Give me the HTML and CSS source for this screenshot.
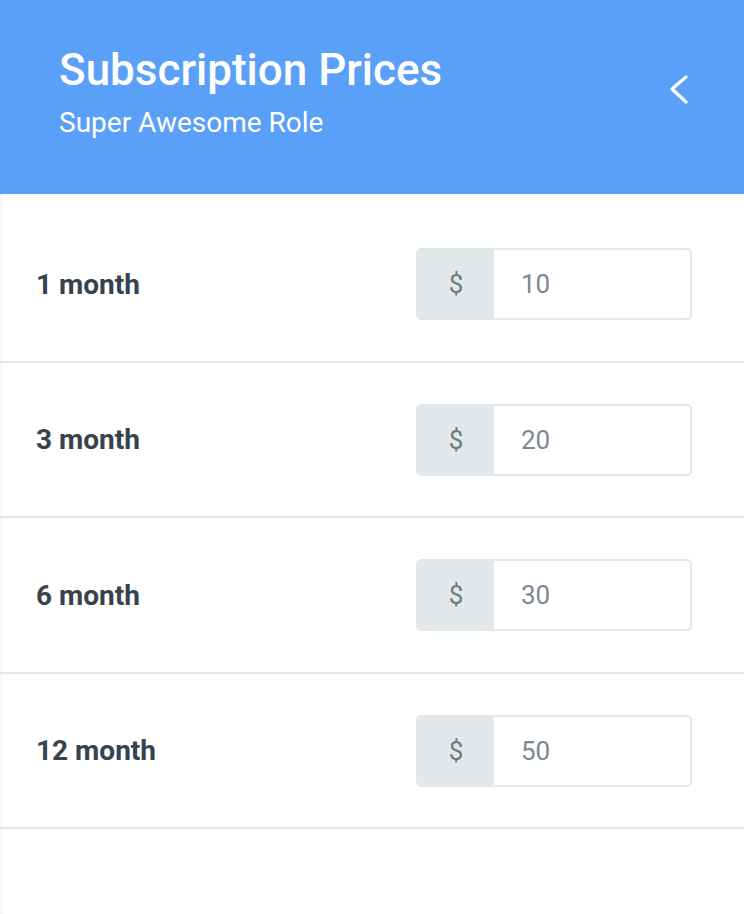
FILE: index.html
```html
<!DOCTYPE html>
<html>
<head>
<meta charset="utf-8">
<link rel="stylesheet" href="styles.css">
</head>
<body>
<div class="panel">
  <header class="header">
    <div class="titles">
      <h1 class="title">Subscription Prices</h1>
      <div class="subtitle">Super Awesome Role</div>
    </div>
    <button class="back" aria-label="Back">
      <svg width="20" height="30" viewBox="0 0 20 30"><path d="M18 3 L4 15 L18 28" fill="none" stroke="#fff" stroke-width="3.2" stroke-linecap="round" stroke-linejoin="round"/></svg>
    </button>
  </header>
  <div class="list">
    <div class="row">
      <span class="label">1 month</span>
      <div class="input-group"><span class="addon">$</span><span class="value">10</span></div>
    </div>
    <div class="row">
      <span class="label">3 month</span>
      <div class="input-group"><span class="addon">$</span><span class="value">20</span></div>
    </div>
    <div class="row">
      <span class="label">6 month</span>
      <div class="input-group"><span class="addon">$</span><span class="value">30</span></div>
    </div>
    <div class="row">
      <span class="label">12 month</span>
      <div class="input-group"><span class="addon">$</span><span class="value">50</span></div>
    </div>
  </div>
</div>
</body>
</html>
```
FILE: styles.css
```css
* { box-sizing: border-box; }
html, body { margin: 0; padding: 0; background: #fff; }
body { font-family: Roboto, "Liberation Sans", sans-serif; }
.panel { width: 744px; min-height: 914px; background: #fff; box-shadow: inset 4px 0 4px -3px rgba(0,0,0,0.06); }
.header {
  height: 194px;
  background: #5ba0f8;
  display: flex;
  align-items: flex-start;
  justify-content: space-between;
  padding: 44px 56px 0 59px;
}
.title { margin: 0; color: #fff; font-size: 44px; font-weight: 500; line-height: 52px; }
.subtitle { color: #fff; font-size: 28px; font-weight: 400; line-height: 32px; margin-top: 11px; }
.back { background: none; border: 0; padding: 0; display: flex; margin-top: 30px; }
.list { padding-top: 13px; }
.row {
  display: flex;
  align-items: center;
  justify-content: space-between;
  padding: 41px 52px 40.5px 36px;
  border-bottom: 2px solid #e3e7ea;
}
.label { font-size: 28px; font-weight: 700; color: #36434d; }
.input-group {
  width: 276px;
  height: 72px;
  display: flex;
  border: 2px solid #e3e8eb;
  border-radius: 5px;
  overflow: hidden;
}
.addon {
  width: 76px;
  background: #e3e8eb;
  display: flex;
  align-items: center;
  justify-content: center;
  font-size: 26px;
  color: #6f7c87;
}
.value {
  flex: 1;
  display: flex;
  align-items: center;
  padding-left: 27px;
  font-size: 26px;
  color: #7b8794;
}
```
